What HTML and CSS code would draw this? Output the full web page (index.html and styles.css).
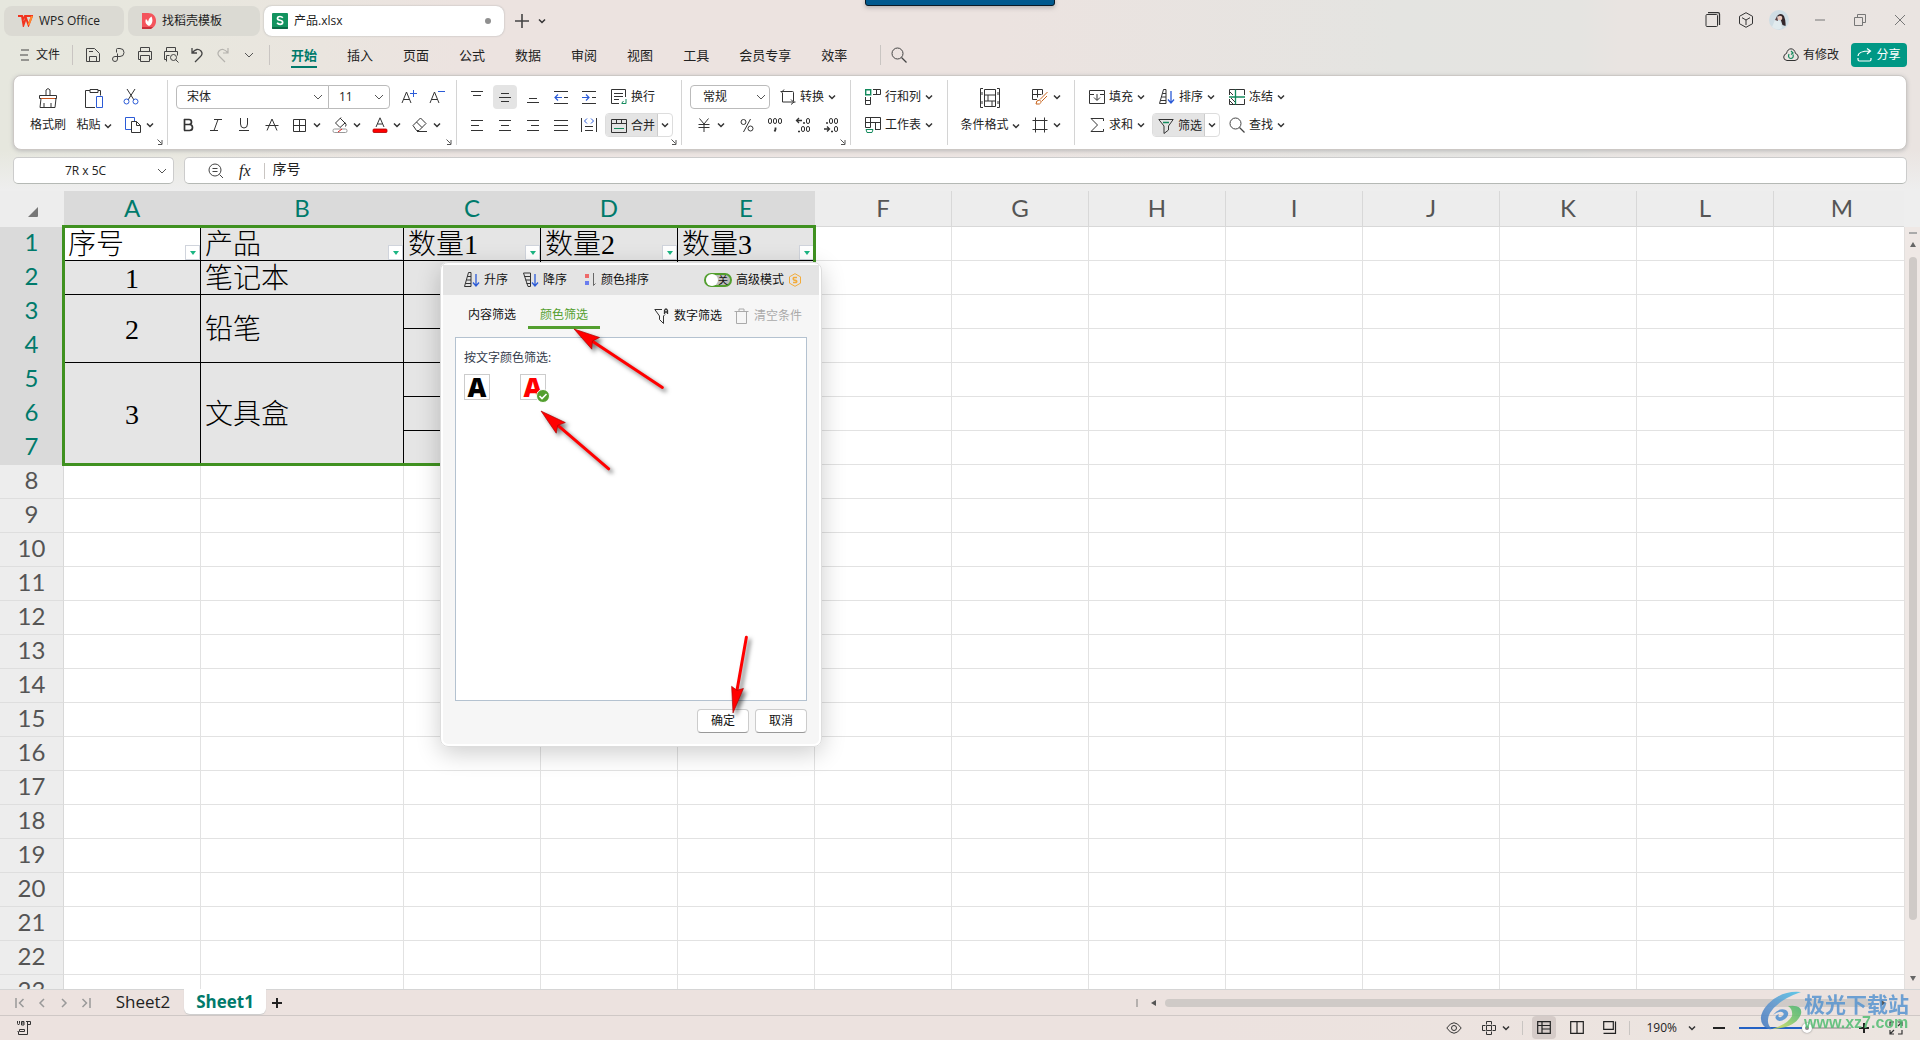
FILE: index.html
```html
<!DOCTYPE html>
<html lang="zh-CN">
<head>
<meta charset="utf-8">
<title>产品.xlsx - WPS Office</title>
<link rel="stylesheet" href="styles.css">
</head>
<body>
<svg class="defs" aria-hidden="true">
  <symbol id="chev" viewBox="0 0 8 8"><path d="M1 2.5l3 3 3-3" fill="none" stroke="#333" stroke-width="1.5"/></symbol>
  <symbol id="chev-thin" viewBox="0 0 10 10"><path d="M1 3l4 4 4-4" fill="none" stroke="#555"/></symbol>
  <symbol id="launch" viewBox="0 0 6 6"><path d="M.5.5l4 4M5 1v4.5H1" fill="none" stroke="#555"/></symbol>
  <symbol id="sort-up" viewBox="0 0 16 16"><path d="M4.500.500h2.500v14H.5zM3.500 4.500H7M2.500 8H7M1.500 11.500H7" fill="none" stroke="#333"/><path d="M12 2v12M9 10.500l3 3.500 3-3.500" fill="none" stroke="#2b5bd7" stroke-width="1.300"/></symbol>
  <symbol id="sort-down" viewBox="0 0 16 16"><path d="M.5 1h7v13.500H5zM1.500 4.500h6M2.500 8h5M3.500 11.500h4" fill="none" stroke="#333"/><path d="M12 2v12M9 10.500l3 3.500 3-3.500" fill="none" stroke="#2b5bd7" stroke-width="1.300"/></symbol>
  <symbol id="search" viewBox="0 0 16 16"><circle cx="6.500" cy="6.500" r="5.500" fill="none" stroke="#444"/><path d="M10.500 10.500l5 5" stroke="#444" stroke-width="1.200"/></symbol>
</svg>

<div class="notch"></div>

<header class="titlebar">
  <nav class="doc-tabs">
    <button class="doc-tab tab-home"><svg width="16" height="12" viewBox="0 0 16 12"><path d="M1 1h4l1.500 9L9 3l2.500 7L15 1H8L5.500 5" fill="none" stroke="#f2331f" stroke-width="2"/><path d="M11.500 10L15 1" stroke="#ff8a2a" stroke-width="2"/></svg>WPS Office</button>
    <button class="doc-tab tab-docer"><svg width="14" height="16" viewBox="0 0 14 16"><path d="M0 0h6c5 0 8 3.500 8 8s-3 8-8 8H0z" fill="#f4545c"/><path d="M0 14h11l-2 2H0z" fill="#c9303a"/><path d="M7 13C3 11 3 8 4 6c1 1 2 2 2 3 .5-2 1-4 3.500-5.500C11 7 11 11 7 13z" fill="#fff"/></svg>找稻壳模板</button>
    <button class="doc-tab tab-file active"><svg width="16" height="16" viewBox="0 0 16 16"><rect width="16" height="16" rx="1" fill="#12935f"/><path d="M0 14h16v1q0 1-1 1H1q-1 0-1-1z" fill="#0b6b46"/><path d="M10.800 4.800C10 3.800 9 3.500 8 3.500c-1.500 0-2.500.8-2.500 1.900C5.500 8 10.700 6.500 10.700 9.300c0 1.200-1 2-2.600 2-1.200 0-2.300-.5-3-1.500" fill="none" stroke="#fff" stroke-width="1.700"/></svg>产品.xlsx<span class="dot"></span></button>
    <button class="tab-add" aria-label="新建"><svg width="14" height="14"><path d="M7 0v14M0 7h14" stroke="#444" stroke-width="1.600"/></svg></button>
    <button class="tab-more" aria-label="更多"><svg width="8" height="8"><use href="#chev"/></svg></button>
  </nav>
  <div class="window-tools">
    <button aria-label="窗口"><svg width="16" height="16" viewBox="0 0 16 16" fill="none" stroke="#333"><rect x="1" y="2.500" width="11.500" height="12" rx="1"/><path d="M3 .7h10q1.500 0 1.500 1.500V13" stroke-width="1.300"/></svg></button>
    <button aria-label="应用"><svg width="16" height="16" viewBox="0 0 16 16" fill="none" stroke="#333"><path d="M8 .7l6.500 3.600v7.400L8 15.300 1.500 11.700V4.300zM4 5.700l4 2.300 4-2.300M8 8v5"/></svg></button>
    <button class="account" aria-label="账户"><svg width="20" height="20" viewBox="0 0 20 20"><circle cx="10" cy="10" r="10" fill="#cfdde4"/><path d="M8 6q4-4 7 0 2 5 1.500 10l-3-1-2-6z" fill="#33272b"/><circle cx="11" cy="8" r="2.300" fill="#ecc9bc"/><path d="M3 17l3-7 5 1 2 7q-5 3-10-1z" fill="#e1ebee"/><path d="M6 10l2-4 1 5z" fill="#5b4143"/></svg></button>
    <button class="win" aria-label="最小化"><svg width="12" height="12"><path d="M1 6h10" stroke="#777"/></svg></button>
    <button class="win" aria-label="还原"><svg width="12" height="12" fill="none" stroke="#777"><path d="M.5 3.500h8v8h-8zM3.500 3.500v-3h8v8h-3"/></svg></button>
    <button class="win" aria-label="关闭"><svg width="12" height="12"><path d="M1 1l10 10M11 1L1 11" stroke="#777"/></svg></button>
  </div>
</header>

<div class="menubar">
  <button class="file-menu"><svg width="9" height="12"><path d="M1 1h8M0 6h8M1 11h8" stroke="#444"/></svg>文件</button>
  <i class="sep"></i>
  <div class="quick">
    <button aria-label="保存"><svg width="16" height="16" fill="none" stroke="#444"><path d="M1.500 14.500v-13h8l5 5v8zM4.500 14.500V9.500h7v5M4 4.500h4"/></svg></button>
    <button aria-label="输出"><svg width="16" height="16" fill="none" stroke="#444"><path d="M5.500 5.500v-3q0-1 1-1H9q4 0 4 4t-4 4H4q-2.500 0-2.500 2.500T4 14.500t2.500-2.500V6.500"/></svg></button>
    <button aria-label="打印"><svg width="16" height="16" fill="none" stroke="#444"><path d="M3.500 4.500v-4h9v4M3.500 12.500h-2v-8h13v8h-2M3.500 8.500h9v6h-9z"/></svg></button>
    <button aria-label="打印预览"><svg width="16" height="16" fill="none" stroke="#444"><path d="M3.500 4.500v-4h9v4M3.500 12.500h-2v-8h13v4M3.500 14.500v-6h3"/><circle cx="10.500" cy="10.500" r="3"/><path d="M12.500 12.500l3 3"/></svg></button>
    <button aria-label="撤销"><svg width="16" height="16" fill="none" stroke="#444" stroke-width="1.300"><path d="M3 1v5h5M3 6q5-6 9-2 2.500 3-1 6l-5 5"/></svg></button>
    <button aria-label="恢复"><svg width="16" height="16" fill="none" stroke="#b5b3ae" stroke-width="1.200"><path d="M13 1v5H8M13 6Q8 0 4 4q-2.500 3 1 6l5 5"/></svg></button>
    <button aria-label="自定义"><svg width="10" height="10"><use href="#chev-thin"/></svg></button>
  </div>
  <i class="sep"></i>
  <nav class="menu-tabs">
    <a href="#" class="active">开始</a><a href="#">插入</a><a href="#">页面</a><a href="#">公式</a><a href="#">数据</a><a href="#">审阅</a><a href="#">视图</a><a href="#">工具</a><a href="#">会员专享</a><a href="#">效率</a>
  </nav>
  <i class="sep sep-search"></i>
  <button class="search" aria-label="搜索"><svg width="16" height="16"><use href="#search"/></svg></button>
  <div class="menu-right">
    <button class="modified"><svg width="16" height="14" viewBox="0 0 16 14" fill="none" stroke="#333"><path d="M4 12.500Q.5 12 .7 9 1 6 3.500 5.500 4.500 1 8 .8q3.500.2 4.500 4.700 2.500.5 2.800 3.500.2 3-3.300 3.500z"/><path d="M6 6q-1.500 4 2 4.500 3-.5 2-4M8 3l2 2-2 1.500" stroke="#138a5d" stroke-width="1.200"/></svg>有修改</button>
    <button class="share"><svg width="15" height="14" fill="none" stroke="#fff" stroke-width="1.200"><path d="M1 8q0-5 12-5M10 .5L13.500 3 10 6M1 10v1.500q0 1.500 1.500 1.500h10q1.500 0 1.500-1.500V10"/></svg>分享</button>
  </div>
</div>

<section class="ribbon" aria-label="开始">
  <div class="group g-clip">
    <button class="big"><svg width="20" height="20" fill="none" stroke="#333"><path d="M1.500 7.500h17v3h-17zM3 10.500L2 19.500h15l1-9M8 7V2q2-3 4 0v5M6 19v-4M13 19v-4"/><path d="M3 10.500h14" stroke="#c8541d"/></svg><span>格式刷</span></button>
    <button class="big"><svg width="20" height="20" fill="none" stroke="#333"><path d="M6 2.500H1.500v17H11M14 2.500h2.500v5M6 1.500h8v3H6z"/><path d="M12.500 8.500h6v11h-6z" stroke="#2b5bd7"/></svg><span>粘贴<svg width="8" height="8"><use href="#chev"/></svg></span></button>
    <div class="stack">
      <button class="ic" aria-label="剪切"><svg width="16" height="16" fill="none"><path d="M4 0l7 11M12 0L5 11" stroke="#333"/><circle cx="3.500" cy="12.500" r="2.500" stroke="#2b5bd7"/><circle cx="12.500" cy="12.500" r="2.500" stroke="#2b5bd7"/></svg></button>
      <button class="ic dd" aria-label="复制"><svg width="16" height="16" fill="none"><path d="M6 12.500H.5V.5h9V4" stroke="#2b5bd7"/><path d="M6.500 4.500h5l4 4v7h-9zM11.500 4.500v4h4" stroke="#333"/></svg><svg width="8" height="8"><use href="#chev"/></svg></button>
    </div>
    <svg class="launcher" width="6" height="6"><use href="#launch"/></svg>
  </div>

  <div class="group g-font">
    <div class="row">
      <button class="combo combo-font" role="combobox" aria-label="字体">宋体<svg width="10" height="10"><use href="#chev-thin"/></svg></button><button class="combo combo-size" role="combobox" aria-label="字号">11<svg width="10" height="10"><use href="#chev-thin"/></svg></button>
      <button class="ic" aria-label="增大字号"><svg width="16" height="16" fill="none"><path d="M1 14L5.500 3 10 14M2.500 10.500h6" stroke="#333"/><path d="M12.500 1v7M9 4.500h7" stroke="#2b5bd7"/></svg></button>
      <button class="ic" aria-label="减小字号"><svg width="16" height="16" fill="none"><path d="M1 14L5.500 3 10 14M2.500 10.500h6" stroke="#333"/><path d="M9 2.500h7" stroke="#2b5bd7"/></svg></button>
    </div>
    <div class="row">
      <button class="ic" aria-label="加粗"><svg width="16" height="16" fill="none" stroke="#333" stroke-width="1.700"><path d="M4 2.500h5q2.500 0 2.500 2.500T9 7.500H4.500M4.500 2v11.500M4 7.500h5.500q3 0 3 3t-3 3H4"/></svg></button>
      <button class="ic" aria-label="倾斜"><svg width="16" height="16" fill="none" stroke="#333"><path d="M6 2.500h8M2 13.500h8M10 2.500l-4 11"/></svg></button>
      <button class="ic" aria-label="下划线"><svg width="16" height="16" fill="none" stroke="#333"><path d="M4.500 1v6q0 4 3.500 4t3.500-4V1M3 13.500h10"/></svg></button>
      <button class="ic" aria-label="删除线"><svg width="16" height="16" fill="none" stroke="#333"><path d="M3 13.500L8 2l5 11.500M1.500 8.500h13"/></svg></button>
      <button class="ic dd" aria-label="边框"><svg width="16" height="16" fill="none" stroke="#333"><path d="M1.500 2.500h12v12h-12zM7.500 2.500v12M1.500 8.500h12"/></svg><svg width="8" height="8"><use href="#chev"/></svg></button>
      <button class="ic dd" aria-label="填充颜色"><svg width="16" height="16" fill="none" stroke="#333"><path d="M8 1l5 5-5 4.500-4.500-4.500L9 .5M13 5.500q2 2.500.5 4"/><rect x="1" y="12" width="14" height="3.500" rx="1.500" stroke="#999" fill="#fff"/><path d="M6 15l4-3" stroke="#e02020"/></svg><svg width="8" height="8"><use href="#chev"/></svg></button>
      <button class="ic dd" aria-label="字体颜色"><svg width="16" height="16" fill="none" stroke="#333"><path d="M4 10L8 .8 12 10M5.500 7h5"/><rect x="1" y="12" width="14" height="3.500" rx="1" fill="#f00" stroke="#b00000" stroke-width=".8"/></svg><svg width="8" height="8"><use href="#chev"/></svg></button>
      <button class="ic dd" aria-label="清除"><svg width="16" height="16" fill="none" stroke="#333"><path d="M1 8.500L8.500 1l5.500 5.500-7 7H4.500zM4.500 5l5.500 5.500M5 14.500h10"/></svg><svg width="8" height="8"><use href="#chev"/></svg></button>
    </div>
    <svg class="launcher" width="6" height="6"><use href="#launch"/></svg>
  </div>

  <div class="group g-align">
    <div class="row">
      <button class="ic" aria-label="顶端对齐"><svg width="16" height="16" stroke="#333"><path d="M2 2.500h12M4 6.500h8"/></svg></button>
      <button class="ic on" aria-label="垂直居中"><svg width="16" height="16" stroke="#333"><path d="M4 4.500h8M2 8.500h12M4 12.500h8"/></svg></button>
      <button class="ic" aria-label="底端对齐"><svg width="16" height="16" stroke="#333"><path d="M4 9.500h8M2 13.500h12"/></svg></button>
      <button class="ic" aria-label="减少缩进"><svg width="16" height="16" fill="none" stroke="#333"><path d="M1 2.500h14M1 14.500h14M11 8.500h4"/><path d="M9 8.500H2M5 5.500l-3 3 3 3" stroke="#2b5bd7" stroke-width="1.200"/></svg></button>
      <button class="ic" aria-label="增加缩进"><svg width="16" height="16" fill="none" stroke="#333"><path d="M1 2.500h14M1 14.500h14M11 8.500h4"/><path d="M1 8.500h7M5 5.500l3 3-3 3" stroke="#2b5bd7" stroke-width="1.200"/></svg></button>
      <button class="tx wrap"><svg width="16" height="16" fill="none" stroke="#333"><path d="M8 14.500H.5v-14h14V8M3 4.500h9M3 7.500h9M3 10.500h5"/><path d="M15 10v4.500h-4M12.500 12l-2 2.500" stroke="#138a5d"/></svg>换行</button>
    </div>
    <div class="row">
      <button class="ic" aria-label="左对齐"><svg width="16" height="16" stroke="#333"><path d="M2 3.500h12M2 8.500h8M2 13.500h12"/></svg></button>
      <button class="ic" aria-label="居中"><svg width="16" height="16" stroke="#333"><path d="M2 3.500h12M4 8.500h8M2 13.500h12"/></svg></button>
      <button class="ic" aria-label="右对齐"><svg width="16" height="16" stroke="#333"><path d="M2 3.500h12M6 8.500h8M2 13.500h12"/></svg></button>
      <button class="ic" aria-label="两端对齐"><svg width="16" height="16" stroke="#333"><path d="M1 3.500h14M1 8.500h14M1 13.500h14"/></svg></button>
      <button class="ic" aria-label="分散对齐"><svg width="16" height="16" fill="none" stroke="#333"><path d="M.5 1v14M15.500 1v14M4 9.500h8M4 13.500h8"/><path d="M6 1.500L3.500 4 6 6.500M10 1.500L12.500 4 10 6.500" stroke="#2b5bd7"/></svg></button>
      <div class="split"><button class="tx"><svg width="16" height="16" fill="none" stroke="#333"><path d="M.5 1.500h15v13H.5zM.5 5.500h15M5.500 1.500v4M10.500 1.500v4"/><path d="M3 10.500h10" stroke="#138a5d"/></svg>合并</button><button class="arrow" aria-label="合并选项"><svg width="8" height="8"><use href="#chev"/></svg></button></div>
    </div>
    <svg class="launcher" width="6" height="6"><use href="#launch"/></svg>
  </div>

  <div class="group g-num">
    <div class="row">
      <button class="combo combo-num" role="combobox" aria-label="数字格式">常规<svg width="10" height="10"><use href="#chev-thin"/></svg></button>
      <button class="tx"><svg width="16" height="16" fill="none" stroke="#333"><path d="M2.500 3.500v9.500H9M4 .5L1.500 3.500M.5 2.500h12q1 0 1 1V12M11 10.500l3 3M15.500 13H9M11 15.500l3-2.500"/></svg>转换<svg width="8" height="8"><use href="#chev"/></svg></button>
    </div>
    <div class="row">
      <button class="ic dd yen" aria-label="货币"><svg width="16" height="16" fill="none" stroke="#333"><path d="M3.500 1.500L8 7l4.500-5.500M2.500 7.500h11M2.500 10.500h11M8 7v8"/></svg><svg width="8" height="8"><use href="#chev"/></svg></button>
      <button class="ic" aria-label="百分比"><svg width="16" height="16" fill="none" stroke="#333"><circle cx="4.500" cy="5" r="2.500"/><circle cx="11.500" cy="11.500" r="2.500"/><path d="M11.500 2L4.500 15"/></svg></button>
      <button class="ic" aria-label="千位分隔"><svg width="16" height="16" fill="none" stroke="#333"><rect x="1.500" y="1.500" width="3" height="5" rx="1.500"/><rect x="6.500" y="1.500" width="3" height="5" rx="1.500"/><rect x="11.500" y="1.500" width="3" height="5" rx="1.500"/><path d="M8.500 10.500v2l-1 2" stroke-width="1.800"/></svg></button>
      <button class="ic" aria-label="增加小数"><svg width="16" height="16" fill="none" stroke="#333"><rect x="11.500" y="1.500" width="3" height="5" rx="1.500"/><path d="M4 1L1.500 3.500 4 6M1.500 3.500H7M8 6h2M3 14.500h2" stroke-width="1.300"/><rect x="6.500" y="9.500" width="3" height="5" rx="1.500"/><rect x="11.500" y="9.500" width="3" height="5" rx="1.500"/></svg></button>
      <button class="ic" aria-label="减少小数"><svg width="16" height="16" fill="none" stroke="#333"><rect x="6.500" y="1.500" width="3" height="5" rx="1.500"/><rect x="11.500" y="1.500" width="3" height="5" rx="1.500"/><path d="M3 6h2M1 12h5.500M4 9.500L6.500 12 4 14.500M8 14.500h2" stroke-width="1.300"/><rect x="11.500" y="9.500" width="3" height="5" rx="1.500"/></svg></button>
    </div>
    <svg class="launcher" width="6" height="6"><use href="#launch"/></svg>
  </div>

  <div class="group g-cells">
    <div class="row"><button class="tx"><svg width="16" height="16" fill="none" stroke="#333"><path d="M8 .5h7.500v5H8M11.500.500v5M.5 8v7.500h5V8M.5 11.500h5"/><path d="M.7.7h5v5h-5z" stroke="#138a5d" stroke-width="1.400"/></svg>行和列<svg width="8" height="8"><use href="#chev"/></svg></button></div>
    <div class="row"><button class="tx"><svg width="16" height="16" fill="none" stroke="#333"><path d="M.5 10.500V.5h15v12H10M.5 5.500h15M5.500.500v10M10.500 5.500v7M.5 10.500h5"/><path d="M1 12.500h7l-1 3H2z" stroke="#138a5d"/></svg>工作表<svg width="8" height="8"><use href="#chev"/></svg></button></div>
  </div>

  <div class="group g-style">
    <button class="big"><svg width="20" height="20" fill="none" stroke="#333"><path d="M3 .5H.5v19H3M17 .5h2.500v19H17M4.500 1.500h11v17h-11zM4.500 7h11M4.500 13h11M8 7v6M12 13v5.500M2 4v3M18 4v3M2 13v3M18 13v3"/></svg><span>条件格式<svg width="8" height="8"><use href="#chev"/></svg></span></button>
    <div class="stack">
      <button class="ic dd" aria-label="表格样式"><svg width="16" height="16" fill="none" stroke="#333"><path d="M5 10.500H.5V.5h10v5M.5 5.500h9M5.500.500v8"/><path d="M15.500 3L8 10.500M15 7l-5 5M4 15q4 1 5.500-2l-2-2Q4 11 4 15z" stroke="#c8641d"/></svg><svg width="8" height="8"><use href="#chev"/></svg></button>
      <button class="ic dd" aria-label="单元格样式"><svg width="16" height="16" fill="none" stroke="#333"><path d="M3.500.500v15M12.500.500v15M.5 3.500h15M.5 12.500h15"/></svg><svg width="8" height="8"><use href="#chev"/></svg></button>
    </div>
  </div>

  <div class="group g-edit">
    <div class="row">
      <button class="tx"><svg width="16" height="16" fill="none" stroke="#333"><path d="M5 5.500H.5v-4h15v4H11M.5 5.500v9h15v-9M8 5v6M5 8.500L8 11.500l3-3"/></svg>填充<svg width="8" height="8"><use href="#chev"/></svg></button>
      <button class="tx"><svg width="16" height="16"><use href="#sort-up"/></svg>排序<svg width="8" height="8"><use href="#chev"/></svg></button>
      <button class="tx"><svg width="16" height="16" fill="none" stroke="#333"><path d="M.5 6V.5h15V6M15.500 10v5.500H.5V10M1 3l3 3M1 12l3 3M2 9l4 4"/><path d="M6.500.500v15M0 8h16" stroke="#138a5d" stroke-width="1.300"/></svg>冻结<svg width="8" height="8"><use href="#chev"/></svg></button>
    </div>
    <div class="row">
      <button class="tx"><svg width="16" height="16" fill="none" stroke="#333"><path d="M14.500 4V1.500H2L8.500 8 2 14.500h12.500V12"/></svg>求和<svg width="8" height="8"><use href="#chev"/></svg></button>
      <div class="split"><button class="tx"><svg width="16" height="16" fill="none" stroke="#333"><path d="M.8 1.500h14.400L10.500 8v4L6 15.500V8z"/><path d="M5 4.500h6" stroke="#138a5d" stroke-width="1.300"/></svg>筛选</button><button class="arrow" aria-label="筛选选项"><svg width="8" height="8"><use href="#chev"/></svg></button></div>
      <button class="tx"><svg width="16" height="16"><use href="#search"/></svg>查找<svg width="8" height="8"><use href="#chev"/></svg></button>
    </div>
  </div>
</section>

<div class="formula-row">
  <label class="name-box"><input value="7R x 5C" aria-label="名称框"><svg width="10" height="10"><use href="#chev-thin"/></svg></label>
  <label class="formula-box">
    <svg width="16" height="16" fill="none" stroke="#444"><circle cx="7" cy="7" r="6"/><path d="M11.500 11.500l3.500 3.500M4.500 5.500h5M4.500 8.500h5"/></svg>
    <em>fx</em><i class="sep"></i><input value="序号" aria-label="编辑栏">
  </label>
</div>

<main class="workspace">
  <div class="sheet">
    <table class="grid">
      <colgroup><col class="c-head"><col class="c-norm"><col class="c-wide"><col class="c-norm" span="11"></colgroup>
      <thead><tr><th class="corner"><svg width="10" height="10"><path d="M10 0v9q0 1-1 1H0z" fill="#777"/></svg></th><th class="sel">A</th><th class="sel">B</th><th class="sel">C</th><th class="sel">D</th><th class="sel">E</th><th>F</th><th>G</th><th>H</th><th>I</th><th>J</th><th>K</th><th>L</th><th>M</th></tr></thead>
      <tbody id="rows">
        <tr><th class="sel">1</th><td class="d cur">序号<button class="flt" aria-label="筛选"></button></td><td class="d">产品<button class="flt" aria-label="筛选"></button></td><td class="d">数量1<button class="flt" aria-label="筛选"></button></td><td class="d">数量2<button class="flt" aria-label="筛选"></button></td><td class="d">数量3<button class="flt" aria-label="筛选"></button></td></tr>
        <tr><th class="sel">2</th><td class="d num">1</td><td class="d">笔记本</td><td class="d"></td><td class="d"></td><td class="d"></td></tr>
        <tr><th class="sel">3</th><td class="d num" rowspan="2">2</td><td class="d" rowspan="2">铅笔</td><td class="d"></td><td class="d"></td><td class="d"></td></tr>
        <tr><th class="sel">4</th><td class="d"></td><td class="d"></td><td class="d"></td></tr>
        <tr><th class="sel">5</th><td class="d num" rowspan="3">3</td><td class="d" rowspan="3">文具盒</td><td class="d"></td><td class="d"></td><td class="d"></td></tr>
        <tr><th class="sel">6</th><td class="d"></td><td class="d"></td><td class="d"></td></tr>
        <tr><th class="sel">7</th><td class="d"></td><td class="d"></td><td class="d"></td></tr>
      </tbody>
    </table>
    <div class="selection"></div>

    <section class="filter-pop" aria-label="筛选">
      <div class="pop-sort">
        <button><svg width="16" height="16"><use href="#sort-up"/></svg>升序</button>
        <button><svg width="16" height="16"><use href="#sort-down"/></svg>降序</button>
        <button><svg width="12" height="14"><rect y="1" width="4" height="4" fill="#ee6a6a"/><rect y="8" width="4" height="4" fill="#6a7dee"/><path d="M8.500 0v12.500l2-2" fill="none" stroke="#666"/></svg>颜色排序</button>
        <label class="adv"><input type="checkbox"><span class="switch">关</span>高级模式<svg width="14" height="14" viewBox="0 0 14 14" fill="none" stroke="#f2ac3c"><path d="M7 .7l5.500 3.100v6.400L7 13.300 1.500 10.200V3.800z"/><path d="M9 4.500H6q-1.500 1 0 2.500l2 .5q1.500 1 0 2H5" stroke-width="1.600"/></svg></label>
      </div>
      <div class="pop-tabs">
        <button class="tab">内容筛选</button><button class="tab active">颜色筛选</button>
        <button class="tool tool-num"><svg width="16" height="16" fill="none" stroke="#333"><path d="M8 1.500H.8L5.500 8v3.500l4 4V8l1.500-1.500"/><path d="M10.500 6V2.500q1.500-3 3 0V6M10.500 4h3" stroke-width="1.300"/></svg>数字筛选</button>
        <button class="tool" disabled><svg width="16" height="16" fill="none" stroke="#aaa"><path d="M.5 3.500h14M5 3.500V1h5v2.500M2.500 3.500v12h10v-12"/></svg>清空条件</button>
      </div>
      <div class="pop-list">
        <p>按文字颜色筛选:</p>
        <div class="swatches">
          <button class="swatch auto">A</button>
          <button class="swatch red">A<svg class="badge" width="14" height="14"><circle cx="7" cy="7" r="6.500" fill="#539f2f" stroke="#fff"/><path d="M3.500 7l2.500 2.500L10.500 5" fill="none" stroke="#fff" stroke-width="1.600"/></svg></button>
        </div>
      </div>
      <div class="pop-actions"><button>确定</button><button>取消</button></div>
      <svg class="arrows" width="382" height="485" fill="#f00" stroke="#f00">
        <g transform="translate(134 67) rotate(33.500)"><path d="M18 0h88" stroke-width="3" stroke-linecap="round"/><path d="M0 0l26-7-4 7 4 7z" stroke="#a00" stroke-width=".6"/></g>
        <g transform="translate(101 149) rotate(40.500)"><path d="M18 0h71" stroke-width="3" stroke-linecap="round"/><path d="M0 0l26-7-4 7 4 7z" stroke="#a00" stroke-width=".6"/></g>
        <g transform="translate(293 451) rotate(-80)"><path d="M18 0h59" stroke-width="3" stroke-linecap="round"/><path d="M0 0l26-6-3 6 3 6z" stroke="#a00" stroke-width=".6"/></g>
      </svg>
    </section>
  </div>
  <div class="vscroll"><i class="split-box"></i><i class="tri up"></i><i class="thumb"></i><i class="tri down"></i></div>
</main>

<div class="sheetbar">
  <div class="sheet-nav">
    <button aria-label="首表"><svg width="10" height="12" fill="none" stroke="#999" stroke-width="1.500"><path d="M1 1v10M8.500 2l-4 4 4 4"/></svg></button>
    <button aria-label="上一表"><svg width="10" height="12" fill="none" stroke="#999" stroke-width="1.500"><path d="M7 2L3 6l4 4"/></svg></button>
    <button aria-label="下一表"><svg width="10" height="12" fill="none" stroke="#999" stroke-width="1.500"><path d="M3 2l4 4-4 4"/></svg></button>
    <button aria-label="末表"><svg width="10" height="12" fill="none" stroke="#999" stroke-width="1.500"><path d="M1.500 2l4 4-4 4M9 1v10"/></svg></button>
  </div>
  <button class="sheet-tab">Sheet2</button><button class="sheet-tab active">Sheet1</button>
  <button class="sheet-add" aria-label="新建工作表"><svg width="10" height="10"><path d="M5 0v10M0 5h10" stroke="#222" stroke-width="2"/></svg></button>
  <div class="hscroll"><i class="grip"></i><i class="tri left"></i><i class="thumb"></i><i class="tri right"></i></div>
</div>

<footer class="status">
  <svg width="16" height="14" fill="none" stroke="#333"><path d="M.5 0v2.500l1 1.500 1-1.500V0M4.500.500H7v3.500H4.500zM4.500 2H7M9 .5h4.500v3H11M10.500.500v13M2.500 8.500h5v2h-5zM.5 10.500h1v3h9"/></svg>
  <div class="status-right">
    <button class="eye" aria-label="护眼"><svg width="16" height="12" fill="none" stroke="#333"><path d="M.8 6Q8-4.500 15.200 6 8 16.500.8 6z"/><circle cx="8" cy="6" r="2.500"/></svg></button>
    <button class="focus" aria-label="阅读"><svg width="14" height="14" fill="none" stroke="#333"><path d="M4.500 3.500v-3h5v3M4.500 10.500v3h5v-3M3.500 4.500h-3v5h3M10.500 4.500h3v5h-3M4.500 4.500h5v5h-5z"/></svg><svg width="8" height="8"><use href="#chev"/></svg></button>
    <i class="sep"></i>
    <button class="view on" aria-label="普通视图"><svg width="14" height="13" fill="none" stroke="#222" stroke-width="1.200"><path d="M.7.7h12.600v11.600H.7zM.7 4.500h12.600M5 .7v11.600M5 8h8"/></svg></button>
    <button class="view" aria-label="分页预览"><svg width="14" height="13" fill="none" stroke="#222" stroke-width="1.200"><path d="M.7.7h12.600v11.600H.7zM7 .7v11.600"/></svg></button>
    <button class="view" aria-label="页面布局"><svg width="14" height="13" fill="none" stroke="#222" stroke-width="1.200"><path d="M.7.7h9.600v7.600H.7zM12.500.500v11.800H.5"/></svg></button>
    <i class="sep sep-zoom"></i>
    <button class="zoom">190%<svg width="8" height="8"><use href="#chev"/></svg></button>
    <button class="minus" aria-label="缩小"><svg width="12" height="12"><path d="M0 6h12" stroke="#222" stroke-width="2"/></svg></button>
    <input class="slider" type="range" min="0" max="100" value="62" aria-label="缩放">
    <button class="plus" aria-label="放大"><svg width="12" height="12"><path d="M0 6h10M5 1v10" stroke="#222" stroke-width="2"/></svg></button>
    <button class="full" aria-label="全屏"><svg width="14" height="14" fill="none" stroke="#333" stroke-width="1.200"><path d="M5 1H1v4M9 1h4v4M5 13H1V9M9 13h4V9M9 5l4-4M5 9l-4 4"/></svg></button>
  </div>
</footer>

<div class="watermark">
  <svg width="42" height="40" viewBox="0 0 42 40">
    <defs>
      <linearGradient id="wb" x1="0" y1="1" x2="1" y2="0"><stop offset="0" stop-color="#3f74bd"/><stop offset=".5" stop-color="#5c97d0"/><stop offset="1" stop-color="#45c4ea"/></linearGradient>
      <linearGradient id="wg" x1="0" y1="1" x2="1" y2="0"><stop offset="0" stop-color="#e3e35a"/><stop offset=".6" stop-color="#6fc36a"/><stop offset="1" stop-color="#43b36c"/></linearGradient>
    </defs>
    <path d="M41 1Q22-1 8 13-3 25 3 34q4 5 9 4Q5 32 10 22 18 9 41 1z" fill="url(#wb)"/>
    <path d="M28 15q15-2 13 8-5 14-29 15 16-5 20-13 1-7-4-10z" fill="url(#wg)"/>
    <path d="M13 24q6-8 13-5 5 4-1 9-6 4-9 0-2-3 3-5-2 4 2 3 5-3 1-5-4-1-9 3z" fill="#4d8fd0"/>
  </svg>
  <div><b>极光下载站</b><span>www.xz7.com</span></div>
</div>
<script src="grid.js"></script>
</body>
</html>
```
FILE: styles.css
```css
* { box-sizing: border-box; }
html, body { height: 100%; }
body {
  margin: 0; display: flex; flex-direction: column; overflow: hidden;
  font: 12px/16px "Open Sans", "Noto Sans CJK SC", sans-serif; color: #222;
  background:
    linear-gradient(to bottom, transparent 150px, #eee 190px, #eee 900px, transparent 901px),
    linear-gradient(to right, #e6e7de 0, #e8e7de 180px, #ece3e0 460px, #ece3e0 1000px, #e4e4e1 1400px, #e5e4e1 1580px, #e9e4e1 1620px, #eae4e1 100%);
}
button { font: inherit; color: inherit; background: none; border: 0; padding: 0; display: flex; align-items: center; justify-content: center; white-space: nowrap; }
input { font: inherit; color: inherit; }
svg { flex: none; display: block; }
.defs { position: absolute; width: 0; height: 0; }
.sep { width: 1px; height: 20px; background: #c9c5c2; flex: none; }

.notch { position: absolute; top: -4px; left: 865px; width: 190px; height: 10px; background: #00598e; border: 1px solid #0a1a26; border-radius: 3px; box-shadow: 0 2px 4px #8888; }

.titlebar { display: flex; justify-content: space-between; height: 40px; padding: 6px 14px 4px 4px; flex: none; }
.doc-tabs { display: flex; gap: 4px; }
.doc-tab { height: 30px; border-radius: 8px; background: #dbdad3; justify-content: flex-start; gap: 6px; }
.tab-home { width: 120px; padding-left: 13px; }
.tab-docer { width: 132px; padding-left: 14px; }
.tab-file { width: 240px; padding: 0 13px 0 8px; }
.doc-tab.active { background: #fff; box-shadow: 0 0 2px #aaa; }
.dot { width: 6px; height: 6px; border-radius: 50%; background: #8f8f8f; margin-left: auto; }
.tab-add { width: 28px; }
.tab-more { width: 8px; margin-left: -2px; }
.window-tools { display: flex; align-items: center; height: 28px; }
.window-tools button { width: 33px; }
.window-tools .account { margin-right: 5px; }
.window-tools .win { width: 40px; }
.window-tools .win:last-child { width: 26px; justify-content: flex-end; }

.menubar { display: flex; align-items: center; height: 35px; padding: 0 13px 5px 20px; flex: none; }
.file-menu { gap: 7px; margin-right: 12px; }
.quick { display: flex; width: 196px; padding-left: 7px; }
.quick button { width: 26px; height: 24px; }
.menu-tabs { display: flex; gap: 30px; margin-left: 21px; font-size: 13px; line-height: 20px; }
.menu-tabs a { color: inherit; text-decoration: none; padding: 3px 0 1px; height: 26px; border-bottom: 2px solid transparent; }
.menu-tabs .active { color: #007a6b; font-weight: 700; border-color: #007a6b; }
.sep-search { margin-left: 33px; }
.search { margin-left: 10px; }
.menu-right { display: flex; gap: 12px; margin-left: auto; }
.modified { gap: 4px; }
.share { width: 56px; height: 24px; gap: 4px; background: #009885; color: #fff; border-radius: 4px; }

.ribbon { display: flex; margin: 0 13px; height: 75px; background: #fff; border: 1px solid #ccc8c5; border-radius: 8px; box-shadow: 0 1px 4px #bbb; padding: 4px 0; flex: none; }
.group { position: relative; padding: 5px 0 0 6px; border-right: 1px solid #d4d4d4; }
.group:last-child { border: 0; padding-left: 7px; }
.row { display: flex; height: 24px; margin-bottom: 4px; align-items: center; }
.launcher { position: absolute; right: 4px; bottom: 0; }
.g-clip { width: 154px; display: flex; padding-left: 11px; }
.g-font { width: 289px; }
.g-align { width: 225px; }
.g-align .wrap { margin-left: 2px; }
.g-num { width: 169px; padding-left: 8px; }
.g-cells { width: 97px; padding-left: 8px; }
.g-style { width: 127px; display: flex; padding-left: 13px; }
.big { flex-direction: column; height: 52px; gap: 8px; justify-content: flex-start; padding-top: 3px; }
.big span { display: flex; align-items: center; gap: 3px; height: 18px; }
.g-clip .big { width: 46px; }
.g-style .big { width: 58px; }
.big span svg { margin-top: 2px; }
.stack { display: flex; flex-direction: column; gap: 4px; margin-left: 2px; }
.g-clip .stack .ic:first-child { width: 24px; }
.g-style .stack { margin-left: 7px; }
.ic { width: 28px; height: 24px; flex: none; }
.ic.dd { width: 40px; gap: 5px; justify-content: flex-start; padding-left: 6px; }
.ic.yen { width: 43px; }
.ic.on { width: 24px; margin: 0 2px; background: #e4e4e4; border-radius: 4px; }
.tx { height: 24px; gap: 4px; padding: 0 6px; }
.combo { height: 24px; border: 1px solid #bbb; background: #fff; justify-content: space-between; padding: 0 5px 0 10px; }
.combo-font { width: 153px; border-radius: 4px 0 0 4px; margin-left: 2px; }
.combo-size { width: 62px; border-radius: 0 4px 4px 0; margin: 0 5px 0 -1px; }
.combo-num { width: 80px; border-radius: 4px; padding-left: 12px; padding-right: 3px; margin-right: 4px; }
.split { display: flex; border: 1px solid #ddd; border-radius: 4px; overflow: hidden; margin: 0 0 0 2px; width: 68px; height: 24px; }
.split .tx { background: #e4e4e4; width: 52px; padding: 0 1px 0 4px; border-right: 1px solid #ccc; }
.split .arrow { width: 14px; }
.g-edit .tx { width: 70px; }
.g-edit .split { margin: 0 2px 0 0; }
.g-edit .split .tx { width: 52px; }

.formula-row { display: flex; gap: 10px; margin: 7px 13px; flex: none; }
.name-box, .formula-box { display: flex; align-items: center; height: 27px; background: #fff; border: 1px solid #ccc; border-bottom-color: #b5b9b5; border-radius: 5px; }
.name-box { width: 161px; padding-right: 6px; }
.name-box input { width: 100%; text-align: center; border: 0; background: none; min-width: 0; padding: 0; }
.formula-box { flex: 1; padding-left: 23px; }
.formula-box em { font: italic 16px/20px "Liberation Serif", serif; margin: 0 13px 0 15px; }
.formula-box .sep { height: 16px; }
.formula-box input { flex: 1; border: 0; background: none; font: 14px/20px "Noto Sans CJK SC", sans-serif; padding: 0 0 5px 8px; }

.workspace { flex: 1; display: flex; min-height: 0; border-bottom: 1px solid #d5d5d5; }
.sheet { position: relative; flex: 1; min-width: 0; overflow: hidden; background: #fff; }
.grid { table-layout: fixed; width: 1911px; border-collapse: separate; border-spacing: 0; }
.c-head { width: 64px; } .c-norm { width: 137px; } .c-wide { width: 203px; }
.grid th, .grid td { padding: 0; height: 34px; border-right: 1px solid #e2e2e2; border-bottom: 1px solid #e2e2e2; overflow: hidden; }
.grid th { background: #ededed; color: #555; font: 24px/30px Lato, sans-serif; border-color: #d8d8d8; }
.grid thead th { height: 36px; padding-bottom: 2px; }
.grid th.sel { background: #dadada; color: #007a6b; border-color: #dadada; }
.grid tbody th { padding-bottom: 3px; border-bottom-color: #dedede; }
.grid .corner { border-color: #ededed; }
.corner svg { margin: 8px 0 0 28px; }
.grid td.d { position: relative; background: #e5e5e5; border-color: #000; padding: 3px 0 0 4px; color: #000; font: 300 28px/30px "Liberation Serif", "Noto Sans CJK SC", serif; }
.grid td.cur { background: #fff; }
.grid td.num { text-align: center; padding-left: 0; }
.flt { position: absolute; right: 0; bottom: 0; width: 15px; height: 15px; background: #fff; border: 1px solid #d0d4dc; }
.flt::after { content: ""; border: 3px solid transparent; border-top: 4px solid #1cb583; border-bottom: 0; }
.selection { position: absolute; left: 62px; top: 34px; width: 754px; height: 241px; border: 3px solid #3f9120; pointer-events: none; }

.filter-pop { position: absolute; left: 440px; top: 71px; width: 382px; height: 485px; display: flex; flex-direction: column; background: #f6f6f6; border: 3px solid #fff; border-radius: 8px; outline: 1px solid #ddd; outline-offset: -1px; box-shadow: 0 6px 24px #0003; color: #111; }
.pop-sort { display: flex; align-items: center; height: 30px; background: #e4e4e4; padding: 0 17px 0 21px; }
.pop-sort button { gap: 4px; margin-right: 15px; }
.pop-sort button:nth-child(3) { margin-left: 3px; }
.adv { display: flex; align-items: center; gap: 4px; margin-left: auto; }
.adv input { position: absolute; opacity: 0; }
.switch { width: 28px; height: 14px; border: 2px solid #539f2f; border-radius: 7px; background: #bbb; font-size: 10px; line-height: 11px; text-align: right; padding-right: 2px; position: relative; }
.switch::before { content: ""; position: absolute; left: 0; top: -1px; width: 12px; height: 12px; border-radius: 50%; background: #fff; }
.pop-tabs { display: flex; height: 42px; padding: 9px 17px 9px 13px; align-items: stretch; }
.tab { width: 72px; height: 25px; padding-bottom: 1px; border-bottom: 3px solid transparent; }
.tab.active { color: #539f2f; border-color: #539f2f; }
.tool { gap: 4px; height: 24px; margin-left: 12px; }
.tool-num { margin-left: auto; }
.tool:disabled { color: #aaa; }
.pop-list { flex: 1; margin: 0 12px; background: #fff; border: 1px solid #b4c2d0; padding: 12px 8px; color: #333b4b; }
.pop-list p { margin: 0 0 8px; }
.swatches { display: flex; gap: 30px; }
.swatch { position: relative; width: 26px; height: 26px; border: 1px solid #ccc; background: #fff; color: #000; font: 800 26px/24px "Open Sans", sans-serif; }
.swatch.red { color: #f00; }
.badge { position: absolute; right: -5px; bottom: -4px; }
.pop-actions { display: flex; justify-content: flex-end; gap: 6px; padding: 8px 12px 11px; }
.pop-actions button { width: 52px; height: 24px; background: #fff; border: 1px solid #ccc; border-bottom-color: #999; border-radius: 4px; }
.arrows { position: absolute; left: -3px; top: -3px; overflow: visible; pointer-events: none; filter: drop-shadow(3px 3px 2px #0008); }

.vscroll { width: 16px; display: flex; flex-direction: column; align-items: center; background: #efe8e5; border-left: 1px solid #e3e0de; margin-top: 36px; padding: 5px 0 8px; }
.split-box { width: 8px; height: 2px; background: #aaa; margin-bottom: 8px; }
.tri { border: 3px solid transparent; flex: none; }
.tri.up { border-bottom: 5px solid #666; border-top: 0; }
.tri.down { border-top: 5px solid #666; border-bottom: 0; }
.tri.left { border-right: 5px solid #555; border-left: 0; }
.tri.right { border-left: 5px solid #555; border-right: 0; }
.thumb { border-radius: 4px; background: #cfcac7; }
.vscroll .thumb { width: 8px; flex: 1; margin: 10px 0 56px; }

.sheetbar { display: flex; height: 26px; background: #ece2df; border-bottom: 1px solid #cfc8c6; flex: none; }
.sheet-nav { display: flex; gap: 12px; width: 102px; padding-left: 15px; }
.sheet-tab { width: 82px; height: 24px; font-size: 17px; line-height: 22px; border-radius: 0 0 6px 6px; }
.sheet-tab.active { background: #fff; color: #007a6b; font-weight: 700; box-shadow: 0 1px 1px #ccc; margin-top: -1px; height: 25px; }
.sheet-add { margin-left: 6px; }
.hscroll { flex: 1; display: flex; align-items: center; margin-left: 854px; padding-right: 34px; }
.grip { width: 2px; height: 8px; background: #b5b0ae; margin-right: 13px; }
.hscroll .thumb { height: 8px; flex: 1; margin: 0 10px 0 9px; }
.status { display: flex; align-items: center; justify-content: space-between; height: 24px; background: linear-gradient(to right, #ece2df, #ece2df 1200px, #ece5e0); padding: 0 17px 1px; flex: none; }
.status-right { display: flex; align-items: center; }
.status .sep { height: 14px; }
.focus { gap: 6px; margin: 0 12px 0 20px; }
.view { width: 24px; height: 23px; border-radius: 4px; margin-left: 9px; }
.view.on { background: #d5cbc8; }
.sep-zoom { margin: 0 16px 0 7px; }
.zoom { gap: 11px; margin-right: 17px; }
.slider { appearance: none; width: 112px; height: 14px; margin: 0 8px 0 14px; background: linear-gradient(to right, #2462c4 62%, #b9b3b0 62%) center / 100% 2px no-repeat; }
.slider::-webkit-slider-thumb { appearance: none; width: 10px; height: 10px; border-radius: 50%; background: #888; border: 3px solid #fff; box-shadow: 0 0 2px #777; }
.full { margin-left: 18px; }

.watermark { position: absolute; right: 11px; bottom: 9px; display: flex; gap: 2px; opacity: .85; pointer-events: none; }
.watermark div { display: flex; flex-direction: column; }
.watermark b { font: 700 21px/24px "Noto Sans CJK SC", sans-serif; color: #5794d0; }
.watermark span { font: 700 16px/16px "Liberation Sans", sans-serif; color: #52bd72; }
```
FILE: grid.js
```js
// Fill the sheet out to its last visible column and row.
const body = document.getElementById("rows");
for (const row of body.rows) {
  for (let c = 0; c < 8; c++) row.insertCell();
}
for (let n = 8; n <= 23; n++) {
  const row = body.insertRow();
  const head = document.createElement("th");
  head.textContent = n;
  row.append(head);
  for (let c = 0; c < 13; c++) row.insertCell();
}
```
